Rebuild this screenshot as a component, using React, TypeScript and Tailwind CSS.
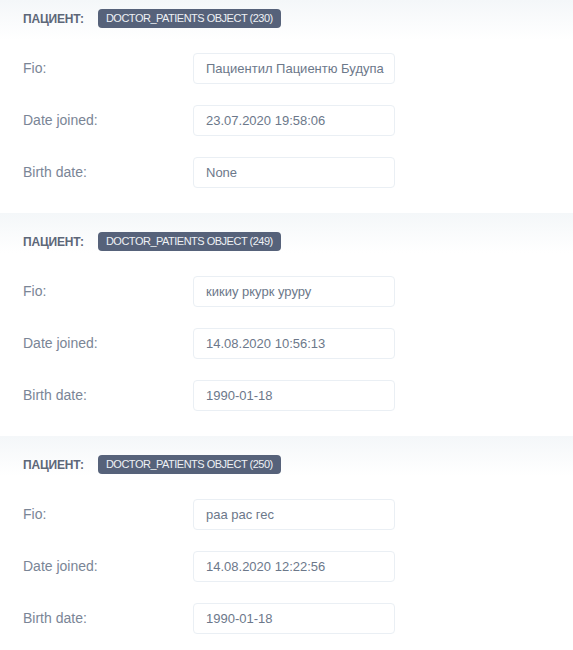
import React from "react";

const sections = [
  { id: 230, fio: "Пациентил Пациентю Будупа", joined: "23.07.2020 19:58:06", birth: "None" },
  { id: 249, fio: "кикиу ркурк уруру", joined: "14.08.2020 10:56:13", birth: "1990-01-18" },
  { id: 250, fio: "раа рас гес", joined: "14.08.2020 12:22:56", birth: "1990-01-18" },
];

function Field({ label, value }: { label: string; value: string }) {
  return (
    <div className="flex items-center h-[31px]">
      <div className="w-[193px] pl-[23px] text-[14px] text-[#7a8596]">{label}</div>
      <div className="w-[202px] h-[31px] flex items-center px-[12px] border border-[#eaeff4] rounded-[4px] bg-white text-[13px] text-[#6c788a] overflow-hidden whitespace-nowrap">
        {value}
      </div>
    </div>
  );
}

export default function App() {
  return (
    <div className="w-[573px] h-[650px] overflow-hidden bg-white" style={{ fontFamily: '"Liberation Sans", Arial, sans-serif' }}>
      {sections.map((s, i) => (
        <div
          key={s.id}
          className={`bg-gradient-to-b from-[#f4f7f9] to-white to-[40px] pb-[25px] ${i === 0 ? "pt-[9px]" : "pt-[19px]"}`}
        >
          <div className="flex items-center h-[19px] pl-[23px]">
            <span className="text-[12px] font-bold text-[#5d6778] tracking-[-0.2px]">ПАЦИЕНТ:</span>
            <span className="ml-[14px] bg-[#56627a] text-[#eef1f5] text-[11px] leading-none rounded-[4px] px-[8px] h-[19px] flex items-center tracking-[-0.5px]">
              DOCTOR_PATIENTS OBJECT ({s.id})
            </span>
          </div>
          <div className="mt-[25px] flex flex-col gap-[21px]">
            <Field label="Fio:" value={s.fio} />
            <Field label="Date joined:" value={s.joined} />
            <Field label="Birth date:" value={s.birth} />
          </div>
        </div>
      ))}
    </div>
  );
}
